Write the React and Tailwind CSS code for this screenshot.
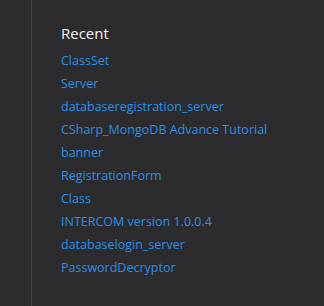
const recent = [
  "ClassSet",
  "Server",
  "databaseregistration_server",
  "CSharp_MongoDB Advance Tutorial",
  "banner",
  "RegistrationForm",
  "Class",
  "INTERCOM version 1.0.0.4",
  "databaselogin_server",
  "PasswordDecryptor",
];

export default function App() {
  return (
    <div className="flex h-[306px] w-[324px] bg-[#2c2c2e] font-['Open_Sans',sans-serif]">
      <div className="w-[32px] border-r border-[#3f3f46]" />
      <div className="flex-1 pl-[29px] pt-[22px]">
        <h2 className="text-[15px] leading-[22px] text-[#f1f1f1]">Recent</h2>
        <ul className="mt-[5px] flex flex-col">
          {recent.map((name) => (
            <li key={name} className="text-[12.5px] leading-[23px] text-[#2b8fe6]">
              <a href="#">{name}</a>
            </li>
          ))}
        </ul>
      </div>
    </div>
  );
}
